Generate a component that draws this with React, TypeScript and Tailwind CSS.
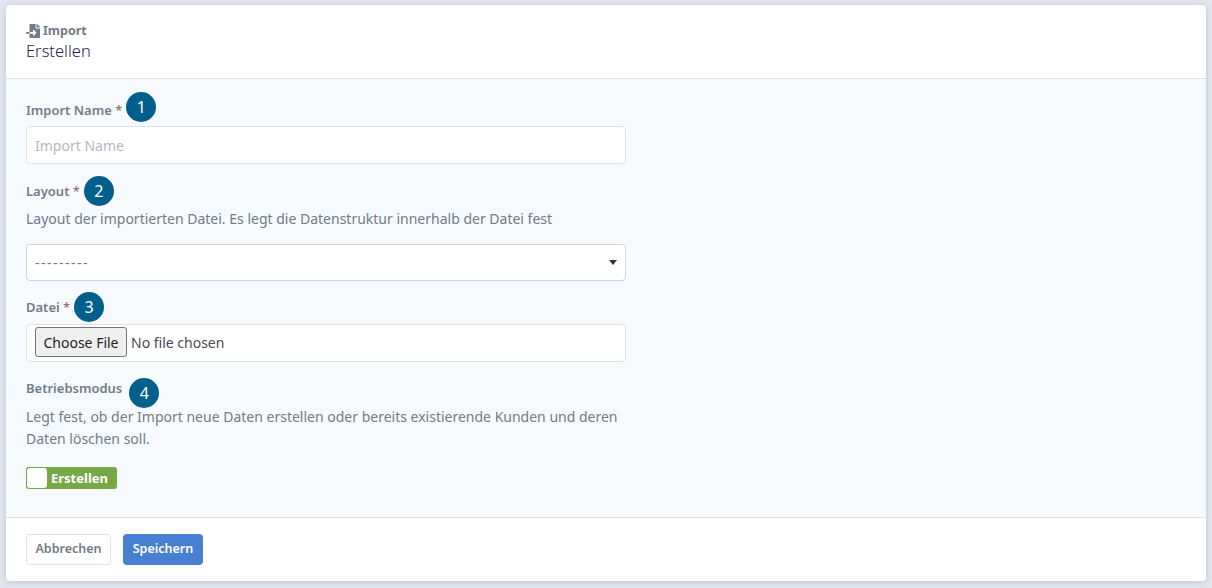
import React from 'react';
import { FaFileImport } from 'react-icons/fa';

const Badge = ({ n, className }: { n: number; className: string }) => (
  <span className={`flex h-[30px] w-[30px] shrink-0 items-center justify-center rounded-full bg-[#005f8b] text-[16px] text-white ${className}`}>
    {n}
  </span>
);

const Label = ({ text, required, labelClass, children }: { text: string; required?: boolean; labelClass?: string; children: React.ReactNode }) => (
  <div className="flex h-[30px] items-center">
    <span className={`text-[13px] font-semibold text-[#727b88] ${labelClass ?? ''}`}>
      {text}
      {required && <span className="text-[#96757a]"> *</span>}
    </span>
    {children}
  </div>
);

export default function App() {
  return (
    <div className="h-[588px] bg-[#e2e6ee] pt-[5px] px-[6px] font-['Noto_Sans',sans-serif]">
      <div className="h-[576px] w-[1200px] overflow-hidden rounded-[4px] bg-white shadow-[0_1px_6px_rgba(90,100,120,0.25)] flex flex-col">
        {/* Header */}
        <header className="h-[74px] shrink-0 border-b border-[#e0e4ea] px-5 pt-[18px]">
          <div className="flex h-[16px] items-center gap-[3px] text-[12.5px] font-bold text-[#727b88]">
            <FaFileImport size={14} className="shrink-0" />
            Import
          </div>
          <div className="mt-[1px] text-[16.5px] font-light leading-[22px] text-[#1f2347]">Erstellen</div>
        </header>

        {/* Form */}
        <main className="flex-1 bg-[#f6fafd] px-5 pt-[13px]">
          <div className="w-[600px]">
            <Label text="Import Name" required labelClass="mt-[7px]">
              <Badge n={1} className="ml-[4px]" />
            </Label>
            <input
              placeholder="Import Name"
              className="mt-1 block h-[38px] w-full rounded-[4px] border border-[#dde1e7] bg-white px-2 text-[14px] text-[#727b88] outline-none placeholder:text-[#b3b9c2]"
            />

            <div className="mt-[12px]">
              <Label text="Layout" required labelClass="mt-[2px]">
                <Badge n={2} className="ml-[4px]" />
              </Label>
            </div>
            <p className="mt-[2px] text-[14px] leading-[22px] text-[#727b88]">
              Layout der importierten Datei. Es legt die Datenstruktur innerhalb der Datei fest
            </p>
            <div className="mt-[14px] flex h-[37px] items-center justify-between rounded-[4px] border border-[#cfd3da] bg-white pl-2 pr-[8px] text-[14px] text-[#727b88]">
              <span className="tracking-[1.5px]">---------</span>
              <span className="h-0 w-0 border-x-[4px] border-t-[5px] border-x-transparent border-t-[#33363b]" />
            </div>

            <div className="mt-[11px]">
              <Label text="Datei" required labelClass="mt-[2px]">
                <Badge n={3} className="ml-[4px]" />
              </Label>
            </div>
            <div className="mt-[2px] flex h-[38px] items-center rounded-[4px] border border-[#dde1e7] bg-white pb-[2px] pl-2 text-[14px] text-[#4a4a5a]">
              <button className="h-[30px] w-[92px] rounded-[3px] border border-[#767676] bg-[#efefef] text-[14px] text-[#222]">
                Choose File
              </button>
              <span className="ml-1">No file chosen</span>
            </div>

            <div className="mt-[16px]">
              <Label text="Betriebsmodus" labelClass="mt-[-8px]">
                <Badge n={4} className="ml-[7px]" />
              </Label>
            </div>
            <p className="mt-[-2px] text-[14px] leading-[22px] text-[#727b88]">
              Legt fest, ob der Import neue Daten erstellen oder bereits existierende Kunden und deren Daten löschen soll.
            </p>
            <div className="mt-[17px] flex h-[22px] w-[91px] items-center rounded-[3px] bg-[#77a846] p-[1px]">
              <span className="h-[20px] w-[20px] rounded-[3px] bg-white" />
              <span className="ml-[4px] mt-[1px] text-[13px] font-bold text-white">Erstellen</span>
            </div>
          </div>
        </main>

        {/* Footer */}
        <footer className="flex h-[64px] shrink-0 items-center gap-3 border-t border-[#e0e4ea] px-5 pb-[1px]">
          <button className="h-[31px] w-[85px] rounded-[4px] border border-[#e0e4ea] bg-white text-[12.5px] font-semibold text-[#727b88]">
            Abbrechen
          </button>
          <button className="h-[31px] w-[80px] rounded-[4px] bg-[#487fd1] text-[12.5px] font-semibold text-white">
            Speichern
          </button>
        </footer>
      </div>
    </div>
  );
}
